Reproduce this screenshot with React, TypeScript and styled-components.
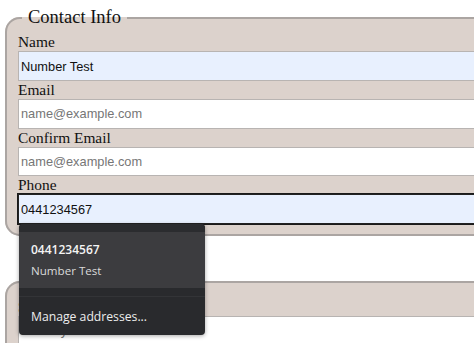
import React from "react";
import styled, { createGlobalStyle } from "styled-components";

const GlobalStyle = createGlobalStyle`
  html, body {
    margin: 0;
    padding: 0;
    overflow: hidden;
    background: #ffffff;
  }
  body {
    font-family: "Liberation Serif", "Times New Roman", serif;
    font-size: 15.4px;
  }
`;

export default function App() {
    return (
        <>
            <GlobalStyle/>
            <Page>
                <Fieldset>
                    <Legend>Contact Info</Legend>
                    <Label>Name</Label>
                    <Input $filled defaultValue="Number Test"/>
                    <Label>Email</Label>
                    <Input placeholder="name@example.com"/>
                    <Label>Confirm Email</Label>
                    <Input placeholder="name@example.com"/>
                    <Label>Phone</Label>
                    <Input $filled $focused defaultValue="0441234567"/>
                </Fieldset>
                <Fieldset $second>
                    <Legend>Address</Legend>
                    <Label>Street</Label>
                    <Input placeholder="123 Any Street"/>
                </Fieldset>

                <Popup>
                    <PopupGap/>
                    <Suggestion>
                        <SuggestionTitle>0441234567</SuggestionTitle>
                        <SuggestionSub>Number Test</SuggestionSub>
                    </Suggestion>
                    <PopupSeparator/>
                    <Footer>Manage addresses...</Footer>
                </Popup>
            </Page>
        </>
    );
}

const Page = styled.div`
  position: relative;
  width: 474px;
  height: 343px;
  overflow: hidden;
`;

const Fieldset = styled.fieldset<{ $second?: boolean }>`
  width: 560px;
  margin: ${p => (p.$second ? "36px" : "7px")} 0 0 5px;
  padding: 5.4px 11px 9.6px 11px;
  border: 2px solid #aba5a2;
  border-radius: 15px;
  background: #dcd2cc;
  box-sizing: border-box;
`;

const Legend = styled.legend`
  margin-left: 4px;
  padding: 0 6px;
  font-size: 18.5px;
  line-height: 21px;
  color: #111;
`;

const Label = styled.label`
  display: block;
  height: 18px;
  line-height: 18px;
  color: #111;
`;

const Input = styled.input<{ $filled?: boolean; $focused?: boolean }>`
  display: block;
  width: 100%;
  height: 29.7px;
  box-sizing: border-box;
  margin: 0;
  padding: 1px 2px;
  font-family: "Liberation Sans", Arial, sans-serif;
  font-size: 12.8px;
  color: #111;
  background: ${p => (p.$filled ? "#e8f0fe" : "#ffffff")};
  border: 1px solid ${p => (p.$focused ? "#222" : "#b8b4b2")};
  box-shadow: ${p => (p.$focused ? "0 0 0 1px #1a1a1a" : "none")};
  outline: none;

  &::placeholder {
    color: #767676;
  }
`;

const Popup = styled.div`
  position: absolute;
  left: 19px;
  top: 224px;
  width: 186px;
  height: 111px;
  display: flex;
  flex-direction: column;
  background: #292a2d;
  border-radius: 4px;
  box-shadow: 0 1px 4px rgba(0, 0, 0, 0.35);
  overflow: hidden;
  font-family: "Open Sans", "Noto Sans", sans-serif;
  color: #f1f1f1;
`;

const PopupGap = styled.div`
  height: 8px;
  background: #2b2c2f;
`;

const Suggestion = styled.div`
  height: 56px;
  padding: 0 12px;
  display: flex;
  flex-direction: column;
  justify-content: center;
  gap: 6px;
  background: #3c3c3f;
`;

const SuggestionTitle = styled.div`
  font-size: 12px;
  font-weight: 600;
  line-height: 15px;
  color: #f4f4f4;
`;

const SuggestionSub = styled.div`
  font-size: 11.6px;
  line-height: 15px;
  color: #dadada;
`;

const PopupSeparator = styled.div`
  height: 8px;
  background: #292a2d;
  border-bottom: 1px solid #333437;
`;

const Footer = styled.div`
  flex: 1;
  display: flex;
  align-items: center;
  padding: 0 12px;
  font-size: 12.2px;
  color: #ededed;
`;
